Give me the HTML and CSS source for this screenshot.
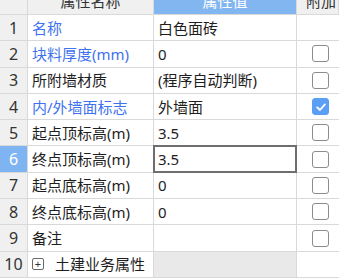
FILE: index.html
```html
<!DOCTYPE html>
<html lang="zh">
<head>
<meta charset="utf-8">
<link rel="stylesheet" href="styles.css">
</head>
<body>
<div class="grid">
  <div class="cell head idx"></div>
  <div class="cell head name-h">属性名称</div>
  <div class="cell head val-h">属性值</div>
  <div class="cell head add-h">附加</div>

  <div class="cell idx">1</div>
  <div class="cell name req">名称</div>
  <div class="cell val">白色面砖</div>
  <div class="cell add"></div>

  <div class="cell idx">2</div>
  <div class="cell name req">块料厚度(mm)</div>
  <div class="cell val">0</div>
  <div class="cell add"><span class="cb"></span></div>

  <div class="cell idx">3</div>
  <div class="cell name">所附墙材质</div>
  <div class="cell val">(程序自动判断)</div>
  <div class="cell add"><span class="cb"></span></div>

  <div class="cell idx">4</div>
  <div class="cell name req">内/外墙面标志</div>
  <div class="cell val">外墙面</div>
  <div class="cell add"><span class="cb on"><svg viewBox="0 0 16 16" width="16" height="16"><path d="M4.2 8.3 L7 11 L11.9 5.4" fill="none" stroke="#fff" stroke-width="1.8" stroke-linecap="round" stroke-linejoin="round"/></svg></span></div>

  <div class="cell idx">5</div>
  <div class="cell name">起点顶标高(m)</div>
  <div class="cell val">3.5</div>
  <div class="cell add"><span class="cb"></span></div>

  <div class="cell idx sel">6</div>
  <div class="cell name">终点顶标高(m)</div>
  <div class="cell val edit">3.5</div>
  <div class="cell add"><span class="cb"></span></div>

  <div class="cell idx">7</div>
  <div class="cell name">起点底标高(m)</div>
  <div class="cell val">0</div>
  <div class="cell add"><span class="cb"></span></div>

  <div class="cell idx">8</div>
  <div class="cell name">终点底标高(m)</div>
  <div class="cell val">0</div>
  <div class="cell add"><span class="cb"></span></div>

  <div class="cell idx">9</div>
  <div class="cell name">备注</div>
  <div class="cell val"></div>
  <div class="cell add"><span class="cb"></span></div>

  <div class="cell idx">10</div>
  <div class="cell name group"><span class="exp">+</span><span class="gtext">土建业务属性</span></div>
  <div class="cell val grey"></div>
  <div class="cell add"></div>
</div>
</body>
</html>
```
FILE: styles.css
```css
html, body {
  margin: 0;
  padding: 0;
  background: #ffffff;
  overflow: hidden;
}
body {
  width: 339px;
  height: 279px;
  font-family: "Noto Sans", "Noto Sans CJK SC", sans-serif;
  font-size: 15px;
  color: #1e1e1e;
}
.grid {
  display: grid;
  width: 339px;
  grid-template-columns: 28px 126px 143px 1fr;
  grid-template-rows: 27px repeat(10, 26.3px);
  margin-top: -12px;
}
.cell {
  box-sizing: border-box;
  border-right: 1px solid #d9d9d9;
  border-bottom: 1px solid #d9d9d9;
  display: flex;
  align-items: center;
  line-height: 18px;
  white-space: nowrap;
  overflow: hidden;
  min-width: 0;
}
.head {
  background: #f0f0f0;
  justify-content: center;
  color: #333;
  font-size: 15px;
}
.val-h {
  background: #82b6f0;
  color: #ffffff;
}
.add-h {
  justify-content: flex-start;
  padding-left: 9px;
}
.idx {
  background: #f0f0f0;
  justify-content: center;
  color: #333;
  font-size: 16px;
}
.idx.sel {
  background: #7fb4f2;
  color: #ffffff;
}
.name {
  padding-left: 4px;
}
.name.req {
  color: #3e72ee;
}
.val {
  padding-left: 4px;
}
.val.edit {
  border: 2px solid #6e6e6e;
  margin: -1px 0 0 -1px;
  padding-left: 3px;
}
.val.grey {
  background: #e9e9e9;
}
.add {
  border-right: none;
  padding-left: 15px;
}
.cb {
  box-sizing: border-box;
  width: 17px;
  height: 17px;
  border: 1px solid #8c8c8c;
  border-radius: 3px;
  background: #fff;
  display: block;
  flex: none;
}
.cb.on {
  background: #5a9ff5;
  border-color: #5a9ff5;
  position: relative;
}
.cb.on svg {
  position: absolute;
  left: 0;
  top: 0;
}
.group {
  padding-left: 4px;
}
.exp {
  box-sizing: border-box;
  width: 12px;
  height: 12px;
  border: 1px solid #6a6a6a;
  border-radius: 2px;
  font-size: 11px;
  line-height: 9px;
  text-align: center;
  color: #333;
  display: block;
  flex: none;
}
.gtext {
  margin-left: 11px;
}
```
